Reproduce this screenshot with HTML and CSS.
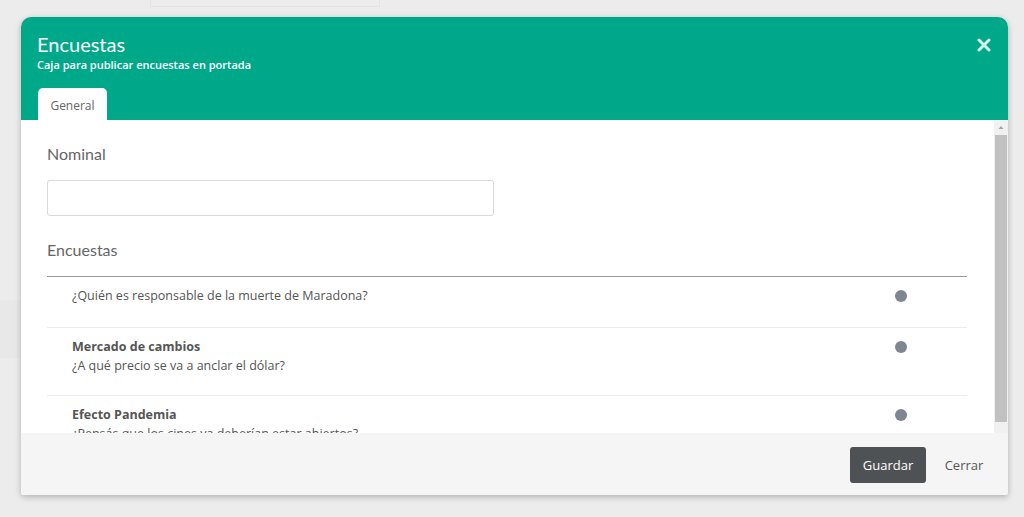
FILE: index.html
```html
<!DOCTYPE html>
<html lang="es">
<head>
<meta charset="utf-8">
<title>Encuestas</title>
<link rel="stylesheet" href="styles.css">
</head>
<body>
<div class="backdrop">
  <div class="bg-top"></div>
  <div class="bg-left"></div>
  <div class="modal">
    <div class="modal-header">
      <div class="titles">
        <h1 class="title">Encuestas</h1>
        <p class="subtitle">Caja para publicar encuestas en portada</p>
      </div>
      <button class="close" aria-label="Cerrar">
        <svg width="14" height="14" viewBox="0 0 14 14"><path d="M2 2 L12 12 M12 2 L2 12" stroke="#d6f3ec" stroke-width="3" stroke-linecap="round"/></svg>
      </button>
      <div class="tabs">
        <div class="tab">General</div>
      </div>
    </div>
    <div class="modal-body">
      <div class="content">
        <label class="field-label">Nominal</label>
        <input class="text-input" type="text">
        <div class="field-label second">Encuestas</div>
        <ul class="poll-list">
          <li class="poll">
            <div class="poll-text">
              <div class="poll-q">¿Quién es responsable de la muerte de Maradona?</div>
            </div>
            <span class="dot"></span>
          </li>
          <li class="poll tall">
            <div class="poll-text">
              <div class="poll-title">Mercado de cambios</div>
              <div class="poll-q">¿A qué precio se va a anclar el dólar?</div>
            </div>
            <span class="dot"></span>
          </li>
          <li class="poll tall">
            <div class="poll-text">
              <div class="poll-title">Efecto Pandemia</div>
              <div class="poll-q">¿Pensás que los cines ya deberían estar abiertos?</div>
            </div>
            <span class="dot"></span>
          </li>
        </ul>
      </div>
      <div class="scrollbar">
        <div class="sb-up">
          <svg width="14" height="12" viewBox="0 0 14 12"><path d="M4.5 8 L7 5 L9.5 8 Z" fill="#a3a3a3"/></svg>
        </div>
        <div class="sb-thumb"></div>
      </div>
    </div>
    <div class="modal-footer">
      <button class="btn-save">Guardar</button>
      <button class="btn-close">Cerrar</button>
    </div>
  </div>
</div>
</body>
</html>
```
FILE: styles.css
```css
* { box-sizing: border-box; }
html, body {
  margin: 0;
  padding: 0;
  background: #ececec;
  width: 1024px;
  height: 517px;
  overflow: hidden;
}
.backdrop {
  position: relative;
  height: 517px;
  padding: 17px 16px 0 21px;
}
.bg-top {
  position: absolute;
  left: 150px;
  top: 0;
  width: 230px;
  height: 7px;
  border: 1px solid #e4e4e4;
  border-top: none;
}
.bg-left {
  position: absolute;
  left: 0;
  top: 300px;
  width: 21px;
  height: 58px;
  background: #e8e8e8;
}
.modal {
  position: relative;
  width: 987px;
  height: 478px;
  background: #fff;
  border-radius: 10px 10px 3px 3px;
  box-shadow: 0 2px 6px rgba(0,0,0,0.25);
  display: flex;
  flex-direction: column;
  overflow: hidden;
}
.modal-header {
  position: relative;
  background: #00a88a;
  height: 103px;
  padding: 17px 16px 0 16px;
  display: flex;
  flex-direction: column;
}
.title {
  margin: 0;
  font-family: "Lato", "Noto Sans", sans-serif;
  font-weight: 400;
  font-size: 20px;
  line-height: 20px;
  color: #fff;
}
.subtitle {
  margin: 4px 0 0 0;
  font-family: "Open Sans", sans-serif;
  font-weight: 600;
  font-size: 11px;
  line-height: 14px;
  color: #fff;
}
.close {
  position: absolute;
  right: 17px;
  top: 21px;
  border: none;
  background: transparent;
  padding: 0;
  width: 14px;
  height: 14px;
  cursor: pointer;
}
.close svg { display: block; }
.tabs {
  margin-top: auto;
  display: flex;
}
.tab {
  background: #fff;
  border-radius: 5px 5px 0 0;
  width: 69px;
  height: 32px;
  margin-left: 1px;
  font-family: "Open Sans", sans-serif;
  font-size: 12px;
  color: #666;
  display: flex;
  align-items: center;
  justify-content: center;
  padding-top: 2px;
}
.modal-body {
  flex: 1;
  min-height: 0;
  overflow: hidden;
  background: #fff;
  display: flex;
}
.content {
  flex: 1;
  min-width: 0;
  padding: 24px 27px 20px 26px;
}
.scrollbar {
  width: 14px;
  flex: none;
  background: #f1f1f1;
  display: flex;
  flex-direction: column;
  align-items: center;
}
.sb-up {
  height: 14px;
  width: 14px;
  padding-top: 1px;
}
.sb-up svg { display: block; }
.sb-thumb {
  width: 12px;
  height: 287px;
  background: #c1c1c1;
  margin-top: 1px;
}
.field-label {
  display: block;
  font-family: "Lato", "Noto Sans", sans-serif;
  font-size: 16px;
  line-height: 20px;
  color: #666;
}
.field-label.second { margin-top: 24px; }
.text-input {
  display: block;
  width: 447px;
  height: 36px;
  margin-top: 16px;
  border: 1px solid #d9d9d9;
  border-radius: 3px;
  background: #fff;
  outline: none;
}
.poll-list {
  list-style: none;
  margin: 16px 0 0 0;
  padding: 0;
  border-top: 1px solid #9a9a9a;
}
.poll {
  display: flex;
  align-items: flex-start;
  justify-content: space-between;
  height: 51px;
  padding: 9px 60px 0 25px;
  border-bottom: 1px solid #ececec;
}
.poll.tall { height: 68px; }
.poll-text {
  font-family: "Open Sans", sans-serif;
  font-size: 12.5px;
  line-height: 19px;
  color: #555;
}
.poll-title { font-weight: 700; color: #555; }
.dot {
  width: 12px;
  height: 12px;
  border-radius: 50%;
  background: #7e8791;
  margin-top: 4px;
}
.modal-footer {
  height: 62px;
  background: #f5f5f5;
  display: flex;
  align-items: center;
  justify-content: flex-end;
  padding: 0 24px 0 0;
  gap: 18px;
}
.btn-save {
  background: #4f5254;
  color: #fff;
  border: none;
  border-radius: 3px;
  width: 76px;
  height: 36px;
  font-family: "Open Sans", sans-serif;
  font-size: 13px;
  margin-top: 2px;
}
.btn-close {
  background: transparent;
  border: none;
  color: #555;
  font-family: "Open Sans", sans-serif;
  font-size: 13px;
  padding: 0;
  margin-top: 2px;
  width: 40px;
}
```
